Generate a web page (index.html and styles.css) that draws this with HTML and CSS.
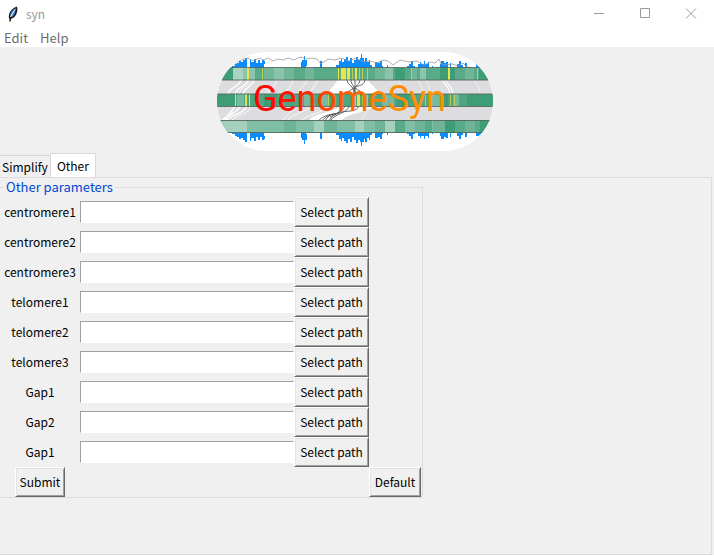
FILE: index.html
```html
<!DOCTYPE html>
<html lang="en">

<head>
    <meta charset="UTF-8">
    <meta name="viewport" content="width=device-width, initial-scale=1.0">
    <title>syn</title>
    <link rel="stylesheet" href="styles.css">
</head>

<body>
    <!-- Title bar -->
    <header class="titlebar">
        <svg class="app-icon" width="12" height="16" viewBox="0 0 12 16" aria-hidden="true">
            <path d="M2 12.500C1 8 3.500 3 10 .6c1 3.400.2 7.400-2.500 10.400L4 13Z" fill="#17191d"/>
            <path d="M3 10.500C3 7 5 4 8.800 2 9 5 7.500 8.500 5.500 10.800Z" fill="#4d8fd6"/>
            <path d="M3.500 11 7.800 3.500" stroke="#d5e6f7" stroke-width="1"/>
            <path d="M3 15.500 3.500 11" stroke="#17191d" stroke-width="1.500"/>
        </svg>
        <h1>syn</h1>
        <div class="window-controls">
            <button type="button" aria-label="Minimize">
                <svg width="12" height="12" viewBox="0 0 12 12"><path d="M1 5.500h10"/></svg>
            </button>
            <button type="button" aria-label="Maximize">
                <svg width="12" height="12" viewBox="0 0 12 12"><path d="M1.500 .5h9v9h-9z"/></svg>
            </button>
            <button type="button" aria-label="Close">
                <svg width="12" height="12" viewBox="0 0 12 12"><path d="M1 .5l10 10M11 .5 1 10.500"/></svg>
            </button>
        </div>
    </header>

    <!-- Menu -->
    <nav class="menu">
        <button type="button">Edit</button>
        <button type="button">Help</button>
    </nav>

    <main>
        <!-- Banner -->
        <div class="banner">
            <svg width="276" height="99" viewBox="0 0 276 99" role="img" aria-label="GenomeSyn">
                <defs>
                    <clipPath id="pill"><rect width="276" height="99" rx="49.500"/></clipPath>
                    <linearGradient id="title-color" gradientUnits="userSpaceOnUse" x1="35" y1="0" x2="230" y2="0">
                        <stop offset="0" stop-color="#ff0000"/>
                        <stop offset="0.200" stop-color="#ff1400"/>
                        <stop offset="0.350" stop-color="#ff3c00"/>
                        <stop offset="0.500" stop-color="#ff6400"/>
                        <stop offset="0.700" stop-color="#ff8c00"/>
                        <stop offset="1" stop-color="#ff9100"/>
                    </linearGradient>
                    <!-- histogram over the first track, mirrored under the last one -->
                    <path id="peaks" fill="#0a8cff" d="M15 16v-2h3v-2h2v-1h2v-2h2v1h2v-2h2v-2h2v9zM33 16v-9h1v3h3v-3h2v4h2v-3h2v3h2v-3h2v1h1v3h-1v4zM84 16v-6h1v-2h2v-4h1v4h2v6h-1v2zM103 16v-7h2v7zM119 16v-3h3v-4h2v-2h1v3h2v-3h2v-2h2v4h2v-3h2v5h2v-3h2v-3h2v3h2v-2h1v-4h1v4h2v3h1v-3h2v4h2v-2h1v5h2v3zM158 16v-6h3v1h2v-2h2v5h1v2zM170 16v-3h1v3zM190 16v-2h2v-2h2v-3h2v5h2v2zM201 16v-4h2v-2h1v2h3v-3h1v3h3v-2h1v6zM215 16v-2h1v2zM223 16v-4h1v-3h3v2h2v-1h2v6zM233 16v-5h1v5zM240 16v-4h2v-3h2v4h2v3zM248 16v-5h2v5zM259 16v-4h3v1h2v3z"/>
                </defs>
                <g clip-path="url(#pill)">
                    <rect width="276" height="99" fill="#fff"/>
                    <use href="#peaks"/>
                    <use href="#peaks" transform="matrix(1 0 0 -1 0 96)"/>
                    <path d="M17 13l5-4 4-2 5-1 5 3 6-3 5 2 4-2 5 3 5-2 5 1 5-2 6 2 6-3 7 2 5-1 5 1 4 5 7-5 7 1 6-2 8 3 7-3 8 4 6-1 7 2 6-3 5 1 5 4 7-5 9 2 8-1 7 4 6-3 5 1 4-4 2 5 6 1 5-1 6 2 5-3 4 4 6 1" fill="none" stroke="#999" stroke-width=".800"/>

                    <!-- links between the tracks -->
                    <path d="M0 28h276v14H0zM0 54h276v15H0z" fill="#dddde0"/>
                    <g fill="none" stroke="#fff">
                        <path d="M31 28c-1 6-12 8-13 14M37 28c-1 6-10 8-11 14M24 28c-1 6-12 8-13 14M18 54c-3 7-7 6-10 15M30 54c-3 8-17 9-21 15M23 54c-3 8-14 9-18 15" stroke-width="1.500"/>
                        <path d="M34 28c-1 6-12 8-12 14M60 28c-1 7-8 8-10 14M76 28c-1 7-6 8-8 14M90 28c-2 6-8 8-9 14M101 28c-3 6-6 8-8 14M111 54c-3 7-22 8-27 15M93 54c-4 6-18 8-23 15M78 54c-3 7-10 9-12 15M35 54c-3 8-17 9-21 15" stroke-width=".800"/>
                        <path d="M225 28c4 7 9 8 7 14M228 28c5 7 8 8 7 14" stroke-width="1.200"/>
                        <path d="M208 28c5 3 3 8 6 14M200 28c5 3 3 8 8 14M182 28c1 5 7 9 11 14M257 28c4 6 6 8 6 14M154 54c-2 6-8 7-10 15" stroke-width=".600"/>
                    </g>
                    <path d="M120 28h31c2 5 10 8 10 14h-50c1-5 8-9 9-14zM123 54h34c-9 7-27 7-33 15h-32c3-8 24-8 31-15z" fill="#fff"/>
                    <g fill="none" stroke="#555" stroke-width=".900">
                        <path d="M130 28c1 6 7 5 7 14M134 28c0 5 4 5 4 14M148 28c-1 7-10 5-11 9M143 28c-1 6-5 5-6 9M138 28v14M137 36c-3 2-6 3-7 6M138 36c3 2 6 3 7 6"/>
                        <path d="M128 54c-4 9-12 6-16 15M133 54c-5 8-14 7-20 15M125 54c-2 8-9 9-12 11M142 54c-3 7-13 4-21 7M122 61c-8 1-13 3-17 8M119 62c-8 0-14 3-18 7M116 62c-4 1-6 4-8 7"/>
                    </g>

                    <!-- first track -->
                    <path d="M0 16h276v12H0z" fill="#59aa89"/>
                    <path d="M0 16h16v12H0zM178 16h10v12h-10zM223 16h15v12h-15zM262 16h14v12h-14z" fill="#3c9d76"/>
                    <path d="M16 16h10v12H16z" fill="#a9d3c2"/>
                    <path d="M26 16h12v12H26zM57 16h10v12H57zM168 16h8v12h-8zM203 16h6v12h-6z" fill="#8cc3ac"/>
                    <path d="M47 16h10v12H47zM67 16h10v12H67zM88 16h9v12h-9zM158 16h10v12h-10zM194 16h6v12h-6zM248 16h9v12h-9z" fill="#72b69a"/>
                    <path d="M30 16h2v12h-2zM121 16h1v12h-1zM124 16h5v12h-5zM130 16h3v12h-3zM138 16h2v12h-2zM231 16h2v12h-2z" fill="#e9e648"/>
                    <path d="M45 16h1v12h-1zM135 16h1v12h-1zM142 16h1v12h-1zM145 16h1v12h-1zM150 16h1v12h-1zM194 16h1v12h-1zM260 16h1v12h-1z" fill="#b9cf57"/>

                    <!-- second track -->
                    <path d="M0 42h276v12H0z" fill="#4ea582"/>
                    <path d="M0 42h18v12H0zM47 42h13v12H47zM180 42h12v12h-12zM225 42h6v12h-6zM250 42h26v12h-26z" fill="#3c9d76"/>
                    <path d="M20 42h7v12h-7zM87 42h10v12H87zM103 42h8v12h-8zM165 42h12v12h-12zM211 42h12v12h-12zM236 42h6v12h-6z" fill="#75b99e"/>
                    <path d="M28 42h2v12h-2zM32 42h1v12h-1zM18 42h1v12h-1zM123 42h2v12h-2zM140 42h3v12h-3z" fill="#e3e44c"/>
                    <path d="M111 42h1v12h-1zM117 42h1v12h-1zM138 42h1v12h-1zM145 42h1v12h-1zM150 42h1v12h-1zM208 42h1v12h-1zM233 42h1v12h-1zM237 42h1v12h-1z" fill="#b9cf57"/>

                    <!-- third track -->
                    <path d="M0 68h276v13H0z" fill="#80bea5"/>
                    <path d="M0 68h30v13H0zM97 68h10v13H97zM138 68h9v13h-9zM168 68h10v13h-10z" fill="#a4d0be"/>
                    <path d="M67 68h12v13H67zM107 68h13v13h-13zM158 68h10v13h-10zM198 68h10v13h-10zM216 68h12v13h-12zM248 68h10v13h-10z" fill="#6fb498"/>
                    <path d="M178 68h10v13h-10zM208 68h7v13h-7zM238 68h10v13h-10zM258 68h6v13h-6z" fill="#59aa89"/>
                    <path d="M228 68h10v13h-10zM263 68h13v13h-13z" fill="#3c9d76"/>
                    <path d="M0 15.500h276M0 28h276M0 42h276M0 54.500h276M0 68.500h276M0 80.500h276" stroke="#53665f" stroke-width=".900" fill="none"/>
                    <text class="banner-title" x="36" y="59" fill="url(#title-color)">GenomeSyn</text>
                </g>
            </svg>
        </div>

        <!-- Tabs -->
        <div class="tabs" role="tablist">
            <button type="button" role="tab" id="tab-simplify" class="tab" aria-selected="false">Simplify</button>
            <button type="button" role="tab" id="tab-other" class="tab active" aria-selected="true" aria-controls="other">Other</button>
        </div>

        <div class="tab-pane" id="other" role="tabpanel" aria-labelledby="tab-other">
            <form>
                <fieldset>
                    <legend>Other parameters</legend>
                    <div class="params">
                        <label for="centromere1">centromere1</label>
                        <input type="text" id="centromere1" name="centromere1">
                        <button type="button">Select path</button>

                        <label for="centromere2">centromere2</label>
                        <input type="text" id="centromere2" name="centromere2">
                        <button type="button">Select path</button>

                        <label for="centromere3">centromere3</label>
                        <input type="text" id="centromere3" name="centromere3">
                        <button type="button">Select path</button>

                        <label for="telomere1">telomere1</label>
                        <input type="text" id="telomere1" name="telomere1">
                        <button type="button">Select path</button>

                        <label for="telomere2">telomere2</label>
                        <input type="text" id="telomere2" name="telomere2">
                        <button type="button">Select path</button>

                        <label for="telomere3">telomere3</label>
                        <input type="text" id="telomere3" name="telomere3">
                        <button type="button">Select path</button>

                        <label for="gap1">Gap1</label>
                        <input type="text" id="gap1" name="gap1">
                        <button type="button">Select path</button>

                        <label for="gap2">Gap2</label>
                        <input type="text" id="gap2" name="gap2">
                        <button type="button">Select path</button>

                        <label for="gap3">Gap1</label>
                        <input type="text" id="gap3" name="gap3">
                        <button type="button">Select path</button>

                        <button type="submit" class="submit">Submit</button>
                        <button type="reset" class="default">Default</button>
                    </div>
                </fieldset>
            </form>
        </div>
    </main>
</body>

</html>
```

FILE: styles.css
```css
* {
    box-sizing: border-box;
}

body {
    display: flex;
    flex-direction: column;
    min-height: 100vh;
    margin: 0;
    background-color: #f0f0f0;
    color: #000;
    font-family: "Noto Sans CJK SC", "Noto Sans", sans-serif;
    font-size: 12px;
    line-height: 18px;
}

button,
input {
    font: inherit;
    color: inherit;
}

.titlebar {
    display: flex;
    align-items: center;
    height: 28px;
    padding-left: 7px;
    background-color: #fff;
}

.titlebar h1 {
    margin: 0 0 0 7px;
    color: #999;
    font-size: 12px;
    font-weight: normal;
}

.window-controls {
    display: flex;
    margin-left: auto;
}

.window-controls button {
    display: flex;
    align-items: center;
    justify-content: center;
    width: 46px;
    height: 28px;
    padding: 0;
    border: none;
    background: none;
}

.window-controls path {
    fill: none;
    stroke: #999;
}

.menu {
    display: flex;
    gap: 12px;
    height: 19px;
    padding-left: 4px;
    background-color: #fff;
}

.menu button {
    padding: 0;
    border: none;
    background: none;
    color: #6d6d6d;
    font-size: 13px;
}

main {
    display: flex;
    flex-direction: column;
    flex: 1;
    padding-right: 2px;
    border-bottom: 1px solid #fff;
}

.banner {
    display: flex;
    justify-content: center;
    padding: 5px 2px 2px 0;
}

.banner-title {
    font-family: Roboto, sans-serif;
    font-size: 36px;
}

.tabs {
    display: flex;
    align-items: flex-end;
}

.tab {
    height: 22px;
    padding: 0 2px;
    border: 1px solid #d9d9d9;
    border-width: 1px 0 0;
    background-color: #f0f0f0;
}

.tab.active {
    height: 25px;
    margin-bottom: -1px;
    padding: 0 6px;
    border-width: 1px 1px 0;
    background-color: #fff;
}

.tab-pane {
    flex: 1;
    border: 1px solid #dcdcdc;
    border-left: none;
}

fieldset {
    width: fit-content;
    margin: 0;
    padding: 1px 1px 0 0;
    border: 1px solid #dcdcdc;
    border-left: none;
}

legend {
    margin-left: 4px;
    padding: 0 2px;
    color: #0046d5;
    font-size: 13px;
}

.params {
    display: grid;
    grid-template-columns: 80px 214px 75px 52px;
    grid-auto-rows: 30px;
    align-items: center;
}

.params label {
    grid-column: 1;
    text-align: center;
}

.params input {
    width: 100%;
    height: 22px;
    padding: 0 2px;
    border: 1px solid #a0a0a0;
    border-right-color: #fff;
    border-bottom-color: #fff;
    background-color: #fff;
    outline: none;
}

.params button {
    height: 30px;
    padding: 0 4px;
    border: 1px solid;
    border-color: #fff #696969 #696969 #fff;
    box-shadow: inset 1px 1px #e3e3e3, inset -1px -1px #a0a0a0;
    background-color: #f0f0f0;
    white-space: nowrap;
}

.params .submit {
    grid-column: 1;
    justify-self: center;
}

.params .default {
    grid-column: 4;
}
```
